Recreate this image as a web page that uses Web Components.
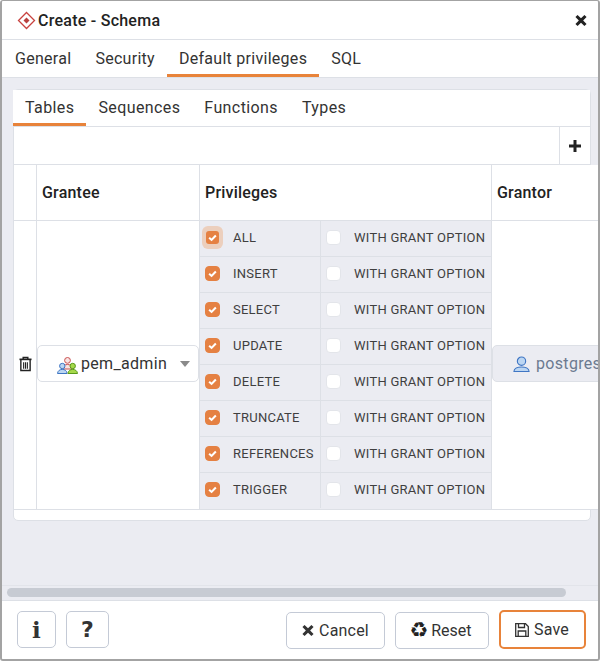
<!DOCTYPE html>
<html>
<head>
<meta charset="utf-8">
<title>Create - Schema</title>
<style>
  html, body{margin: 0; height: 100%; overflow: hidden;}
  body{font-family: Roboto, "Liberation Sans", sans-serif; color: #222;}
</style>
</head>
<body>
<pem-dialog>
  <pem-tabs slot="tabs" items="General,Security,Default privileges,SQL" active="2"></pem-tabs>
  <pem-card>
    <pem-tabs slot="tabs" inner items="Tables,Sequences,Functions,Types" active="0"></pem-tabs>
    <pem-privileges-table></pem-privileges-table>
  </pem-card>
</pem-dialog>

<script>
function define(name, html){
  const template = document.createElement('template');
  template.innerHTML = html;
  customElements.define(name, class extends HTMLElement {
    constructor(){
      super();
      this.attachShadow({mode: 'open'});
      this.shadowRoot.appendChild(template.content.cloneNode(true));
    }
  });
}

const xPath = "M3 1 L7 5 L11 1 L13.5 3.5 L9.5 7.5 L13.5 11.5 L11 14 L7 10 L3 14 L.5 11.5 L4.5 7.5 L.5 3.5 Z";

define("pem-dialog", `
  <style>
    :host{display: flex; flex-direction: column; box-sizing: border-box; width: 600px; height: 661px;
      border: solid #a3a3a3; border-width: 1px 2px 2px 2px; border-radius: 3px; background: #ebecf2; overflow: hidden;}
    #title{display: flex; align-items: center; height: 39px; flex: none; box-sizing: border-box; background: #fff; border-bottom: 1px solid #dde0e6; padding: 0 11px 0 15px;
      font-size: 16px; font-weight: 500; color: #222; letter-spacing: .25px;}
    #title span{margin-left: 2px; flex: 1;}
    #body{flex: 1; min-height: 0; padding: 11px 9px 0 11px; overflow: hidden;}
    #scroll{flex: none; height: 16px; box-sizing: border-box; padding: 2px 32px 3px 5px; border-top: 1px solid #e2e4ea; border-bottom: 1px solid #dde0e6; background: #ebecf2;}
    #scroll div{height: 9px; border-radius: 5px; background: #c7cbd3;}
    #footer{flex: none; height: 58px; box-sizing: border-box; background: #fff; display: flex; align-items: center; padding: 0 12px 1px 15px; gap: 10px;}
    #space{flex: 1;}
    .low{margin-top: 2px;}
  </style>
  <div id="title">
    <svg width="19" height="19" viewBox="0 0 19 19">
      <path d="M9.5 1.5 L17.5 9.5 L9.5 17.5 L1.5 9.5 Z" fill="#fff" stroke="#c8423f" stroke-width="1.3"/>
      <path d="M9.5 6.5 L12.5 9.5 L9.5 12.5 L6.5 9.5 Z" fill="#b8403e"/>
    </svg>
    <span>Create - Schema</span>
    <svg width="12" height="13" viewBox="0 0 14 15"><path d="${xPath}" fill="#222"/></svg>
  </div>
  <slot name="tabs"></slot>
  <div id="body"><slot></slot></div>
  <div id="scroll"><div></div></div>
  <div id="footer">
    <pem-button square style="width:39px"><span style="font:bold 23px 'DejaVu Serif',serif;line-height:1">i</span></pem-button>
    <pem-button square style="width:43px"><span style="font:bold 22px 'DejaVu Sans',sans-serif;line-height:1">?</span></pem-button>
    <div id="space"></div>
    <pem-button class="low" style="width:99px">
      <svg width="12" height="13" viewBox="0 0 14 15"><path d="${xPath}" fill="#333"/></svg>Cancel
    </pem-button>
    <pem-button class="low" style="width:94px;gap:3px;padding-right:3px;letter-spacing:0"><span style="font:21px 'DejaVu Sans',sans-serif;line-height:1;color:#222">&#x267B;</span>Reset</pem-button>
    <pem-button primary style="width:87px;padding-right:2px">
      <svg width="16" height="16" viewBox="0 0 16 16" fill="none" stroke="#333" stroke-width="1.3">
        <path d="M1.7 1.7 H11.5 L14.3 4.5 V14.3 H1.7 Z"/><path d="M4.5 1.7 V5.5 H10.5 V1.7"/><path d="M4.2 14.3 V9 H11.8 V14.3"/>
      </svg>Save
    </pem-button>
  </div>
`);

class PemTabs extends HTMLElement {
  constructor(){
    super();
    this.attachShadow({mode: 'open'});
  }
  connectedCallback(){
    let inner = this.hasAttribute("inner");
    let items = this.getAttribute("items").split(",");
    let active = +this.getAttribute("active");
    this.shadowRoot.innerHTML = `
      <style>
        :host{display: flex; flex: none; height: ${inner ? 37 : 38}px; box-sizing: border-box; background: #fff; border-bottom: 1px solid #dde0e6;
          font-size: 16px; color: #333; letter-spacing: ${inner ? .4 : .28}px; ${inner ? "margin-left: -1px;" : "padding-left: 1px;"}}
        div{box-sizing: border-box; padding: ${inner ? 8 : 9}px 12px 0; height: 100%; white-space: nowrap;}
        .active{border-bottom: 3px solid #e8833a;}
      </style>
      ${items.map((t, i) => `<div class="${i == active ? "active" : ""}">${t}</div>`).join("")}`;
  }
}
customElements.define("pem-tabs", PemTabs);

define("pem-card", `
  <style>
    :host{display: block; box-sizing: border-box; width: 578px; height: 432px; background: #fff; border: 1px solid #dde0e6; border-radius: 5px;}
    #add{display: flex; justify-content: flex-end; height: 38px; box-sizing: border-box; border-bottom: 1px solid #dde0e6;}
    #add div{width: 31px; border-left: 1px solid #dde0e6; display: flex; align-items: center; justify-content: center; padding-right: 1px; box-sizing: border-box;}
  </style>
  <slot name="tabs"></slot>
  <div id="add"><div>
    <svg width="12" height="12" viewBox="0 0 12 12"><path d="M4.5 0 H7.5 V4.5 H12 V7.5 H7.5 V12 H4.5 V7.5 H0 V4.5 H4.5 Z" fill="#222"/></svg>
  </div></div>
  <slot></slot>
`);

define("pem-button", `
  <style>
    :host{display: inline-flex; align-items: center; justify-content: center; gap: 5px; box-sizing: border-box; height: 37px; flex: none;
      border: 1px solid #c4cad6; border-radius: 5px; background: #fff; font-size: 16px; color: #333; letter-spacing: .2px;}
    :host([primary]){border: 2px solid #e8833a; height: 39px; gap: 4px;}
  </style>
  <slot></slot>
`);

define("pem-check", `
  <style>
    :host{display: block; box-sizing: border-box; position: relative; width: 15px; height: 15px; flex: none; border-radius: 4px; background: #fff; border: 1px solid #e3e5ea;}
    :host([checked]){background: #e58143; border-color: #e58143;}
    :host([focus])::before{content: ""; position: absolute; left: -4px; top: -5px; width: 21px; height: 23px; border-radius: 6px; background: #eccfbd;}
    svg{display: none; position: relative;}
    :host([checked]) svg{display: block;}
    :host([focus]) svg{background: #e58143; border-radius: 3px;}
  </style>
  <svg width="13" height="13" viewBox="0 0 14 14" fill="none" stroke="#fff" stroke-width="2.2"><path d="M3.4 7.2 L6 9.6 L10.6 4.8"/></svg>
`);

class PemPrivilegeRow extends HTMLElement {
  constructor(){
    super();
    this.attachShadow({mode: 'open'});
  }
  connectedCallback(){
    let focus = this.hasAttribute("focus") ? "focus" : "";
    this.shadowRoot.innerHTML = `
      <style>
        :host{display: grid; grid-template-columns: 120px 171px; height: 36px; box-sizing: border-box; border-bottom: 1px solid #dde0e6; background: #ebecf2;
          font-size: 13px; color: #3f3f3f; letter-spacing: .25px;}
        :host(:last-child){border-bottom-color: transparent;}
        div{display: flex; align-items: center; padding: 0 0 3px 5px; gap: 13px; white-space: nowrap;}
        div + div{border-left: 1px solid #dde0e6; padding-left: 5px;}
      </style>
      <div><pem-check checked ${focus}></pem-check><span>${this.getAttribute("name")}</span></div>
      <div><pem-check></pem-check><span>WITH GRANT OPTION</span></div>`;
  }
}
customElements.define("pem-privilege-row", PemPrivilegeRow);

define("pem-select", `
  <style>
    :host{display: flex; align-items: center; box-sizing: border-box; height: 37px; background: #fff; border: 1px solid #dde0e6; border-radius: 5px;
      font-size: 16px; color: #333; white-space: nowrap; overflow: hidden; letter-spacing: .32px;}
    :host([disabled]){background: #ebecf2; color: #6b7a90;}
  </style>
  <slot></slot>
`);

define("pem-privileges-table", `
  <style>
    :host{display: grid; grid-template-columns: 23px 163px 292px 130px; grid-template-rows: 56px 288px; width: 608px; background: #fff; font-size: 16px; color: #222; border-bottom: 1px solid #dde0e6; letter-spacing: .2px;}
    .h{display: flex; align-items: center; box-sizing: border-box; padding-left: 5px; border-right: 1px solid #dde0e6; border-bottom: 1px solid #dde0e6; font-weight: 500;}
    .c{display: flex; align-items: center; box-sizing: border-box; border-right: 1px solid #dde0e6; min-width: 0; padding-bottom: 3px;}
    .trash{justify-content: center;}
    #grantee pem-select{width: 162px; padding-left: 19px;}
    #grantor{border-right: 0;}
    #grantor pem-select{width: 130px; padding-left: 20px;}
    #privs{display: block; border-right: 1px solid #dde0e6;}
    .name{margin-left: 3px; flex: 1;}
    .caret{width: 0; height: 0; border: 5px solid transparent; border-top: 6px solid #8a8a8a; border-bottom: 0; margin-right: 8px;}
  </style>
  <div class="h"></div>
  <div class="h">Grantee</div>
  <div class="h">Privileges</div>
  <div class="h" style="border-right:0">Grantor</div>

  <div class="c trash">
    <svg width="13" height="16" viewBox="0 0 14 16" fill="none" stroke="#222" stroke-width="1.5">
      <path d="M.5 3 H13.5" stroke-width="1.8"/><path d="M4.5 2.6 V1 H9.5 V2.6"/><path d="M2 3.5 V15 H12 V3.5"/><path d="M5 6 V13 M7 6 V13 M9 6 V13" stroke-width="1.2"/>
    </svg>
  </div>
  <div class="c" id="grantee">
    <pem-select>
      <svg width="21" height="17" viewBox="0 0 21 17" style="margin-top:3px">
        <g fill="#f9e4e4" stroke="#c8504f" stroke-width="1"><circle cx="10.5" cy="3.4" r="2.9"/><path d="M4.5 12 C5 6 16 6 16.5 12 Z"/></g>
        <g fill="#bcd6f2" stroke="#3f76c4" stroke-width="1"><circle cx="5.3" cy="9" r="2.7"/><path d="M.5 16.5 C.8 11 9.8 11 10.1 16.5 Z"/></g>
        <g fill="#a6d94a" stroke="#5b9a1c" stroke-width="1"><circle cx="15.7" cy="9" r="2.7"/><path d="M10.9 16.5 C11.2 11 20.2 11 20.5 16.5 Z"/></g>
      </svg>
      <span class="name">pem_admin</span><span class="caret"></span>
    </pem-select>
  </div>
  <div id="privs">
    <pem-privilege-row name="ALL" focus></pem-privilege-row>
    <pem-privilege-row name="INSERT"></pem-privilege-row>
    <pem-privilege-row name="SELECT"></pem-privilege-row>
    <pem-privilege-row name="UPDATE"></pem-privilege-row>
    <pem-privilege-row name="DELETE"></pem-privilege-row>
    <pem-privilege-row name="TRUNCATE"></pem-privilege-row>
    <pem-privilege-row name="REFERENCES"></pem-privilege-row>
    <pem-privilege-row name="TRIGGER"></pem-privilege-row>
  </div>
  <div class="c" id="grantor">
    <pem-select disabled>
      <svg width="17" height="18" viewBox="0 0 18 18" fill="#bcd6f2" stroke="#3f76c4" stroke-width="1.2">
        <circle cx="9" cy="6" r="4.4"/><path d="M1 17 C1 10.5 17 10.5 17 17 Z"/>
      </svg>
      <span class="name" style="margin-left:6px">postgres</span>
    </pem-select>
  </div>
`);
</script>
</body>
</html>
